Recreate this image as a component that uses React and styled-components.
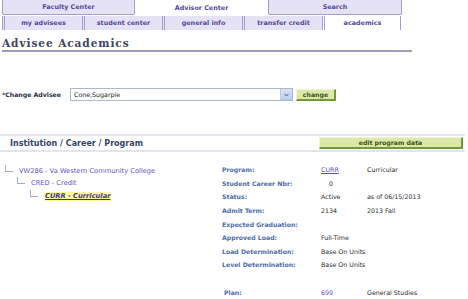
import React from 'react';
import styled, { createGlobalStyle } from 'styled-components';

const Global = createGlobalStyle`
  body {
    margin: 0;
    background: #ffffff;
    font-family: "DejaVu Sans", Verdana, sans-serif;
  }
`;

const Page = styled.div`
  width: 468px;
  height: 299px;
  overflow: hidden;
  position: relative;
`;

// top tabs
const TopTabs = styled.div`
  display: flex;
  padding-left: 2px;
  height: 15px;
`;

const TopTab = styled.div`
  width: ${p => p.w}px;
  margin-right: 2px;
  box-sizing: border-box;
  display: flex;
  align-items: center;
  justify-content: center;
  font-size: 6.4px;
  font-weight: bold;
  color: #55489a;
  background: ${p => (p.active ? '#ffffff' : '#e6e2f6')};
  border: ${p => (p.active ? 'none' : '1px solid #a49ecb')};
  border-top: none;
  border-radius: 0 0 2px 2px;
`;

const SubTabs = styled.div`
  display: flex;
  margin-top: 1px;
  padding-left: 2px;
  height: 14px;
`;

const SubTab = styled.div`
  width: ${p => p.w}px;
  box-sizing: border-box;
  display: flex;
  align-items: center;
  justify-content: center;
  font-size: 6.4px;
  font-weight: bold;
  color: #55489a;
  background: ${p => (p.active ? '#ffffff' : '#e6e2f6')};
  border-left: 3px double #a49ecb;
  border-right: ${p => (p.last ? '1px solid #a49ecb' : 'none')};
`;

const Title = styled.h1`
  margin: 7px 0 0 2px;
  width: 410px;
  padding-bottom: 0;
  line-height: 13px;
  border-bottom: 2px solid #9d9dbf;
  font-family: "DejaVu Serif", Georgia, serif;
  font-size: 10.6px;
  font-weight: bold;
  letter-spacing: 0.9px;
  color: #43435f;
`;

const AdviseeRow = styled.div`
  display: flex;
  align-items: center;
  margin-top: 36px;
  padding-left: 2px;
  height: 13px;
`;

const FieldLabel = styled.span`
  width: 68px;
  font-size: 6.2px;
  font-weight: bold;
  color: #26304a;
`;

const Select = styled.div`
  width: 223px;
  height: 13px;
  box-sizing: border-box;
  border: 1px solid #a9b8cf;
  display: flex;
  align-items: center;
  justify-content: space-between;
  padding-left: 3px;
  font-size: 6.3px;
  color: #222;
`;

const Arrow = styled.span`
  width: 11px;
  height: 11px;
  background: linear-gradient(#dbe5f8, #b9cbee);
  border-left: 1px solid #c0cce2;
  display: flex;
  align-items: center;
  justify-content: center;
`;

const GreenButton = styled.div`
  width: ${p => p.w}px;
  height: 12px;
  box-sizing: border-box;
  margin-left: ${p => p.ml || 0}px;
  background: #dbe8a8;
  border: 1px solid #eef4d4;
  border-right: 2px solid #6f9b34;
  border-bottom: 2px solid #6f9b34;
  display: flex;
  align-items: center;
  justify-content: center;
  font-size: 6.2px;
  font-weight: bold;
  color: #3d5218;
`;

const SectionBar = styled.div`
  margin-top: 33px;
  width: 465px;
  height: 18px;
  box-sizing: border-box;
  border-top: 2px solid #e4e4ec;
  border-bottom: 2px solid #e4e4ec;
  display: flex;
  align-items: center;
  justify-content: space-between;
  padding-left: 10px;
  padding-right: 2px;
`;

const SectionTitle = styled.span`
  font-size: 8px;
  font-weight: bold;
  color: #364567;
`;

const Body = styled.div`
  display: grid;
  grid-template-columns: 222px 1fr;
  margin-top: 11px;
`;

const Tree = styled.div`
  display: flex;
  flex-direction: column;
  padding-left: 5px;
`;

const TreeRow = styled.div`
  display: flex;
  align-items: flex-end;
  height: 12.5px;
  padding-left: ${p => p.indent}px;
`;

const Elbow = styled.span`
  width: 7px;
  height: 6px;
  margin-right: 6px;
  margin-bottom: 4px;
  border-left: 1px solid #a9a9c6;
  border-bottom: 1px solid #a9a9c6;
`;

const TreeText = styled.span`
  font-size: 6.7px;
  color: #6553c4;
  line-height: 9px;
  ${p =>
    p.current &&
    `
    background: #fbf8a0;
    font-weight: bold;
    font-style: italic;
    text-decoration: underline;
    color: #3c2f9a;
    padding: 0 1px;
  `}
`;

const Details = styled.div`
  display: grid;
  grid-template-columns: 99px 46px 1fr;
  grid-auto-rows: 13.6px;
  align-items: center;
`;

const Label = styled.span`
  font-size: 6.2px;
  font-weight: bold;
  color: #4e6ea6;
  white-space: nowrap;
  padding-left: ${p => p.pl || 0}px;
`;

const Value = styled.span`
  font-size: 6.3px;
  color: #2c2c2c;
  white-space: nowrap;
  padding-left: ${p => p.pl || 0}px;
`;

const LinkValue = styled(Value)`
  color: #5a4bc4;
  text-decoration: ${p => (p.plain ? 'none' : 'underline')};
`;

const Spacer = styled.div`
  grid-column: 1 / -1;
  height: 19px;
`;

const topTabs = [
  { label: 'Faculty Center', w: 133 },
  { label: 'Advisor Center', w: 129, active: true },
  { label: 'Search', w: 134 },
];

const subTabs = [
  { label: 'my advisees', w: 80 },
  { label: 'student center', w: 80 },
  { label: 'general info', w: 80 },
  { label: 'transfer credit', w: 80 },
  { label: 'academics', w: 79, active: true, last: true },
];

const rows = [
  ['Program:', <LinkValue key="l">CURR</LinkValue>, 'Curricular'],
  ['Student Career Nbr:', <Value key="v" pl={8}>0</Value>, ''],
  ['Status:', 'Active', 'as of 06/15/2013'],
  ['Admit Term:', '2134', '2013 Fall'],
  ['Expected Graduation:', '', ''],
  ['Approved Load:', 'Full-Time', ''],
  ['Load Determination:', 'Base On Units', ''],
  ['Level Determination:', 'Base On Units', ''],
];

export default function App() {
  return (
    <Page>
      <Global />
      <TopTabs>
        {topTabs.map(t => (
          <TopTab key={t.label} w={t.w} active={t.active}>{t.label}</TopTab>
        ))}
      </TopTabs>
      <SubTabs>
        {subTabs.map(t => (
          <SubTab key={t.label} w={t.w} active={t.active} last={t.last}>{t.label}</SubTab>
        ))}
      </SubTabs>
      <Title>Advisee Academics</Title>

      <AdviseeRow>
        <FieldLabel>*Change Advisee</FieldLabel>
        <Select>
          Cone,Sugarpie
          <Arrow>
            <svg width="5" height="4" viewBox="0 0 5 4">
              <path d="M0.5 0.8 L2.5 3 L4.5 0.8" fill="none" stroke="#4a5f8c" strokeWidth="1" />
            </svg>
          </Arrow>
        </Select>
        <GreenButton w={40} ml={3}>change</GreenButton>
      </AdviseeRow>

      <SectionBar>
        <SectionTitle>Institution / Career / Program</SectionTitle>
        <GreenButton w={144}>edit program data</GreenButton>
      </SectionBar>

      <Body>
        <Tree>
          <TreeRow indent={0}>
            <Elbow />
            <TreeText>VW286 - Va Western Community College</TreeText>
          </TreeRow>
          <TreeRow indent={12}>
            <Elbow />
            <TreeText>CRED - Credit</TreeText>
          </TreeRow>
          <TreeRow indent={25}>
            <Elbow />
            <TreeText current>CURR - Curricular</TreeText>
          </TreeRow>
        </Tree>
        <Details>
          {rows.map(([l, v, e]) => (
            <React.Fragment key={l}>
              <Label>{l}</Label>
              {typeof v === 'string' ? <Value>{v}</Value> : v}
              <Value>{e}</Value>
            </React.Fragment>
          ))}
          <Spacer />
          <Label pl={2}>Plan:</Label>
          <LinkValue plain>699</LinkValue>
          <Value>General Studies</Value>
        </Details>
      </Body>
    </Page>
  );
}
